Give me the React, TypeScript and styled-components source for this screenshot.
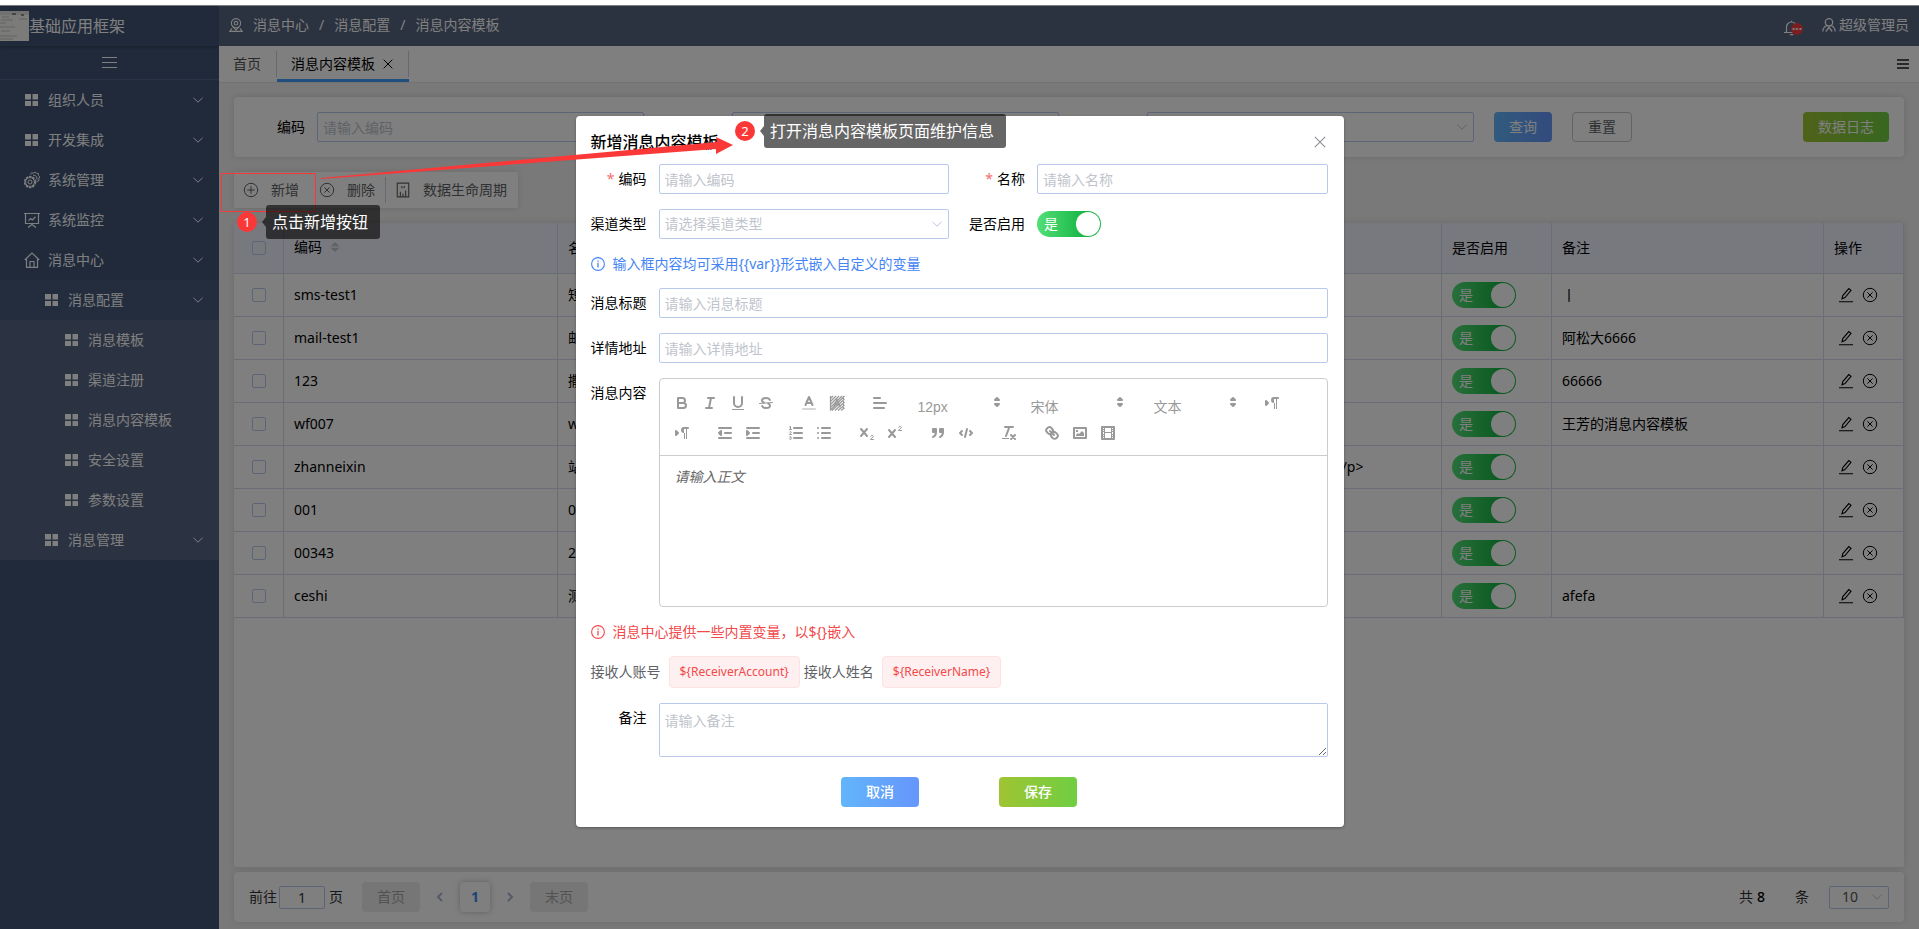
import React from "react";
import styled, { createGlobalStyle, css } from "styled-components";

const GlobalStyle = createGlobalStyle`
  *, *::before, *::after { box-sizing: border-box; }
  body {
    margin: 0;
    background: #fff;
    font-family: "Noto Sans", "Noto Sans CJK SC", sans-serif;
    font-size: 14px;
    line-height: 20px;
    color: #000;
  }
  button, input, select, textarea { font: inherit; color: inherit; margin: 0; }
  button { border: 0; padding: 0; background: none; cursor: pointer; }
  a { color: inherit; text-decoration: none; }
  svg { display: block; flex: none; }
  ul { list-style: none; margin: 0; padding: 0; }
`;

/* ---------- icons ---------- */

type IconProps = { size?: number; children: React.ReactNode; box?: number; stroke?: number };

const Icon = ({ size = 16, box = 16, stroke = 1, children }: IconProps) => (
  <svg
    width={size}
    height={size}
    viewBox={`0 0 ${box} ${box}`}
    fill="none"
    stroke="currentColor"
    strokeWidth={stroke}
    aria-hidden="true"
  >
    {children}
  </svg>
);

const GridIcon = () => (
  <Icon size={14} box={14} stroke={0}>
    <path fill="currentColor" d="M0 1h6v5.500H0zM7.500 1h5.500v5.500H7.500zM0 8h6v5H0zM7.500 8h5.500v5H7.500z" />
  </Icon>
);

const GearIcon = () => (
  <Icon size={18} box={18} stroke={1}>
    <circle cx="7" cy="11" r="5.4" strokeDasharray="2.6 0.8" strokeWidth="1.5" />
    <circle cx="7" cy="11" r="4.4" />
    <circle cx="7" cy="11" r="2" />
    <path d="M7.5 3.5l1-1.7 1.7.4L12 1l1.4 1.2 1.9.3.2 2 1.2 1.5-.9 1.6.2 1.9-1.8.8-1 1.2" />
    <path d="M10 4.2a3.4 3.4 0 0 1 3.8 4.6" />
  </Icon>
);

const MonitorIcon = () => (
  <Icon size={16}>
    <path d="M0 1.5h16M1.5 1.5v10h13v-10M8 11.5v1.5M4 15.5l4-3 4 3" strokeWidth="1.2" />
    <path d="M4.5 8.5l2.2-2 1.6 1.4 3.2-3.2" strokeWidth="1.3" />
  </Icon>
);

const HomeIcon = () => (
  <Icon size={16}>
    <path d="M.7 8L8 1l7.3 7M2.5 7v8.3h11V7M6 15.3V9.5h4v5.8" strokeWidth="1.2" />
  </Icon>
);

const ChevronDown = ({ size = 12 }: { size?: number }) => (
  <Icon size={size} box={12} stroke={1}>
    <path d="M1.5 3.8L6 8.2l4.5-4.4" />
  </Icon>
);

const ChevronSide = ({ right }: { right?: boolean }) => (
  <Icon size={12} box={12} stroke={2}>
    <path d={right ? "M4 2l4 4-4 4" : "M8 2L4 6l4 4"} />
  </Icon>
);

const CloseIcon = ({ size = 10 }: { size?: number }) => (
  <Icon size={size} box={10} stroke={1}>
    <path d="M.7.7l8.6 8.6M9.3.7L.7 9.3" />
  </Icon>
);

const PlusCircle = () => (
  <Icon size={16}>
    <circle cx="8" cy="8" r="6.7" />
    <path d="M8 4.3v7.4M4.3 8h7.4" />
  </Icon>
);

const XCircle = () => (
  <Icon size={16}>
    <circle cx="8" cy="8" r="6.7" />
    <path d="M5.4 5.4l5.2 5.2M10.6 5.4l-5.2 5.2" />
  </Icon>
);

const DataIcon = () => (
  <Icon size={16} box={14}>
    <path d="M2 1h10v12H2zM4.700 13V8.500M7 13V10M9.300 13V7.500M6 3.500v2M8 3.500v2" />
  </Icon>
);

const EditIcon = () => (
  <Icon size={16}>
    <path d="M1 14.7h14M4 11.8l.8-3.2 6-7 2.2 1.8-6 7.2z" strokeWidth="1.1" />
  </Icon>
);

const PlaceIcon = () => (
  <Icon size={14} box={14}>
    <circle cx="7" cy="5.2" r="4.6" strokeWidth="1.1" />
    <circle cx="7" cy="5.2" r="1.8" strokeWidth="1.1" />
    <path d="M3.5 8.3L7 12l3.5-3.7M3 10.2L.8 13.4h12.4L11 10.2" strokeWidth="1.1" />
  </Icon>
);

const UserIcon = () => (
  <Icon size={14} box={14}>
    <circle cx="7" cy="4.3" r="3.7" strokeWidth="1.3" />
    <path d="M4.8 7.5C2.5 8.5 1 10.7.8 13.5M9.2 7.5c2.3 1 3.8 3.2 4 6M3.8 13.5L7 9.3l3.2 4.2" strokeWidth="1.3" />
  </Icon>
);

const BellIcon = () => (
  <Icon size={16}>
    <path d="M0 12.5h15M2.5 12.5V7a5 5 0 0 1 10 0v5.5M5.8 14.6h3.4M7.5 2V.8" strokeWidth="1.2" />
  </Icon>
);

const InfoIcon = () => (
  <Icon size={14} box={14}>
    <circle cx="7" cy="7" r="6.4" strokeWidth="1.1" />
    <path d="M7 5.8v4.6M7 3.4v1.3" strokeWidth="1.3" />
  </Icon>
);

const MenuIcon = ({ thick }: { thick?: boolean }) => (
  <Icon size={16} stroke={thick ? 2 : 1}>
    {thick ? <path d="M2 4h12M2 8h12M2 12h12" /> : <path d="M0 2.5h15M0 7.5h15M0 12.5h15" />}
  </Icon>
);

const SortIcon = () => (
  <Icon size={10} box={10} stroke={0}>
    <path fill="#c0c4cc" d="M5 0l4.5 4.2h-9zM5 10L.5 5.8h9z" />
  </Icon>
);

const Quill = ({ children }: { children: React.ReactNode }) => (
  <svg
    width="18"
    height="18"
    viewBox="0 0 18 18"
    fill="none"
    stroke="#999"
    strokeWidth="2"
    strokeLinecap="round"
    strokeLinejoin="round"
    aria-hidden="true"
  >
    {children}
  </svg>
);

const solid = { fill: "#999", stroke: "none" };

const quillIcons: Record<string, React.ReactNode> = {
  加粗: <path d="M5 4h4.500a2.500 2.500 0 0 1 0 5H5zM5 9h5.500a2.500 2.500 0 0 1 0 5H5z" />,
  斜体: <path d="M7 4h6M5 14h6M8 14l2-10" />,
  下划线: (
    <>
      <path d="M5 3v6a4 4 0 0 0 8 0V3" />
      <path {...solid} d="M3 15h12v1H3z" />
    </>
  ),
  删除线: (
    <>
      <path d="M12.800 6C12.400 4.800 11 4 9 4 6.800 4 5 5 5 6.500c0 1 .6 1.600 1.800 2M5.200 12c.4 1.200 1.800 2 3.800 2 2.200 0 4-1 4-2.500 0-1-.6-1.600-1.800-2" />
      <path strokeWidth="1" d="M15.500 8.500l-13 1" />
    </>
  ),
  文字颜色: (
    <>
      <path strokeOpacity=".4" d="M3 15h12" />
      <path d="M5.500 11L9 3l3.500 8M11.600 9H6.400" />
    </>
  ),
  背景颜色: (
    <>
      <path
        strokeWidth="1.200"
        strokeLinecap="butt"
        d="M2 5l3-3M2 8l6-6M2 11l9-9M2 14l12-12M2 16.500L16.500 2M4 16.500L16.500 5M7 16.500L16.500 8M10 16.500l6.500-5.500M13 16.500l3.500-2.500M2.500 2v14M15.500 2v14"
      />
      <path d="M6 12.500l3-7 3 7M7 10.500h4" strokeWidth="1.500" />
    </>
  ),
  对齐: <path d="M3 9h12M3 14h10M3 4h6" />,
  方向: (
    <>
      <path fill="#999" strokeWidth="2" d="M3 11l2-2-2-2z" />
      <path d="M15 4h-4" />
      <path {...solid} d="M11 3a3 3 0 0 0 0 6h1V3zM11 4h1v11h-1zM13 4h1v11h-1z" />
    </>
  ),
  减少缩进: <path fill="#999" d="M3 14h12M3 4h12M9 9h6M5 7v4L3 9z" />,
  增加缩进: <path fill="#999" d="M3 14h12M3 4h12M9 9h6M3 7v4l2-2z" />,
  有序列表: (
    <>
      <path d="M7 4h8M7 9h8M7 14h8" />
      <path strokeWidth="1" d="M2.500 3l1-.5v3M2.500 5.500h2M2.500 8c.5-.8 1.900-.5 1.800.4 0 .7-1.800 1.600-1.800 2.100h2M2.500 13c.6-.7 1.800-.4 1.800.3 0 .5-.4.700-.8.700.4 0 .8.300.8.800 0 .8-1.300 1-1.800.2" />
    </>
  ),
  无序列表: <path d="M7 4h8M7 9h8M7 14h8M3 4v0M3 9v0M3 14v0" />,
  下标: (
    <>
      <path d="M3 5l6 7M9 5l-6 7" />
      <path strokeWidth="1" d="M12.600 12.200c.5-1.200 2.700-1 2.700.3 0 1.200-2.700 1.800-2.700 3h2.900" />
    </>
  ),
  上标: (
    <>
      <path d="M3 6l6 7M9 6l-6 7" />
      <path strokeWidth="1" d="M12.600 3.200c.5-1.200 2.700-1 2.700.3 0 1.200-2.700 1.800-2.700 3h2.900" />
    </>
  ),
  引用: <path fill="#999" d="M4 5h3v3H4zM11 5h3v3h-3zM7 8c0 4-3 5-3 5M14 8c0 4-3 5-3 5" />,
  代码: <path d="M5 7L3 9l2 2M13 7l2 2-2 2M10 5L8 13" />,
  清除格式: (
    <>
      <path d="M5 3h8M6 12l3.400-9M11 15l4-4M15 15l-4-4" />
      <path {...solid} d="M2 14h7v1H2z" />
    </>
  ),
  链接: (
    <path d="M7 7l4 4M8.900 4.600a3.500 3.500 0 0 1 .36 4.700A3.500 3.500 0 0 1 4.600 8.900C3.200 7.500 2 6.400 4.200 4.200S7.500 3.200 8.900 4.600zM13.400 9.100a3.500 3.500 0 0 0-4.700-.36 3.500 3.500 0 0 0 .36 4.700c1.400 1.400 2.500 2.500 4.700.36S14.800 10.500 13.400 9.100z" />
  ),
  图片: (
    <>
      <path d="M3 4h12v10H3z" />
      <path {...solid} d="M5 12v-1l2-2 1 1 3-3 2 2v3zM5 6h2v2H5z" />
    </>
  ),
  视频: (
    <>
      <path d="M3 3h12v12H3z" />
      <path {...solid} d="M5 3h1v12H5zM12 3h1v12h-1zM5 8h8v1H5zM3 5h3v1H3zM3 7h3v1H3zM3 10h3v1H3zM3 12h3v1H3zM12 5h3v1h-3zM12 7h3v1h-3zM12 10h3v1h-3zM12 12h3v1h-3z" />
    </>
  ),
};

/* ---------- frame ---------- */

const Page = styled.div`
  position: relative;
  display: grid;
  grid-template-columns: 219px minmax(0, 1fr);
  min-height: 100vh;
  padding-top: 6px;
`;

const Sidebar = styled.aside`
  background: #405476;
  color: #fff;
`;

const Brand = styled.div`
  display: flex;
  align-items: center;
  height: 40px;
  font-size: 16px;
  box-shadow: 0 1px 3px rgba(0, 0, 0, 0.3);
`;

const Collapse = styled.button`
  display: flex;
  align-items: center;
  justify-content: center;
  width: 100%;
  height: 34px;
  border-bottom: 1px solid #52668a;
`;

const Menu = styled.ul<{ $tone: string }>`
  background: ${(p) => p.$tone};
`;

const MenuLink = styled.a<{ $level: number; $tone: string }>`
  display: flex;
  align-items: center;
  gap: 9px;
  height: 40px;
  padding: 0 15px 0 ${(p) => 5 + p.$level * 20}px;
  background: ${(p) => p.$tone};
`;

const MenuIconBox = styled.span`
  display: flex;
  justify-content: center;
  width: 14px;
`;

const MenuText = styled.span`
  flex: 1;
`;

const Main = styled.div`
  display: flex;
  flex-direction: column;
  min-width: 0;
  background: #f2f2f2;
`;

const TopBar = styled.header`
  display: flex;
  align-items: center;
  justify-content: space-between;
  height: 40px;
  padding: 0 10px;
  background: #566480;
  color: #fff;
`;

const Crumbs = styled.nav`
  display: flex;
  align-items: center;
  gap: 10px;
  padding-bottom: 2px;
`;

const UserArea = styled.div`
  display: flex;
  align-items: center;
  gap: 22px;
  padding-bottom: 3px;
`;

const Bell = styled.button`
  position: relative;
  padding-top: 6px;
`;

const Badge = styled.span`
  position: absolute;
  left: 7px;
  top: 9px;
  width: 12px;
  height: 12px;
  border-radius: 6px;
  background: #f53f3f;
  font-size: 12px;
  font-weight: 700;
  line-height: 6px;
  text-align: center;
`;

const User = styled.button`
  display: flex;
  align-items: center;
  gap: 3px;
`;

const Tabs = styled.nav`
  display: flex;
  align-items: center;
  height: 37px;
  padding-right: 8px;
  background: #fff;
  border-bottom: 1px solid #e4e4e4;
`;

const Tab = styled.a<{ $active?: boolean }>`
  display: flex;
  align-items: center;
  height: 36px;
  color: ${(p) => (p.$active ? "#000" : "#555")};
  ${(p) => p.$active && "border-bottom: 3px solid #409eff; padding-top: 3px;"}
`;

const TabText = styled.span`
  display: flex;
  align-items: center;
  gap: 8px;
  height: 26px;
  padding: 0 15px 0 14px;
  border-right: 1px solid #ccd3e6;
`;

const TabMore = styled.button`
  margin-left: auto;
  color: #555;
`;

const Content = styled.main`
  flex: 1;
  display: flex;
  flex-direction: column;
  padding: 14px 15px 7px;
`;

const Card = styled.section`
  background: #fff;
  border-radius: 4px;
  box-shadow: 0 0 6px rgba(0, 0, 0, 0.12);
`;

const SearchCard = styled(Card)`
  display: flex;
  align-items: center;
  gap: 20px;
  padding: 15px;
`;

const Field = styled.div`
  flex: 1;
  display: flex;
  align-items: center;
`;

const SearchLabel = styled.label`
  flex: none;
  width: 68px;
  padding-right: 12px;
  text-align: right;
`;

const inputLook = css`
  min-width: 0;
  width: 100%;
  height: 30px;
  padding: 0 5px;
  border: 1px solid #b8c9ec;
  border-radius: 2px;
  background: transparent;
  outline: none;
  &::placeholder { color: #c0c4cc; opacity: 1; }
`;

const Input = styled.input`
  ${inputLook}
`;

const SelectBox = styled.div`
  position: relative;
  flex: 1;
  color: #b8c4de;
  > svg {
    position: absolute;
    right: 6px;
    top: 9px;
    pointer-events: none;
  }
`;

const Select = styled.select`
  ${inputLook}
  appearance: none;
  color: #c0c4cc;
`;

const Button = styled.button<{ $kind: "blue" | "green" | "plain"; $width: number }>`
  width: ${(p) => p.$width}px;
  height: 30px;
  border-radius: 4px;
  color: #fff;
  ${(p) =>
    p.$kind === "blue" &&
    css`
      background: linear-gradient(90deg, #62b5fb, #6696fb);
    `}
  ${(p) =>
    p.$kind === "green" &&
    css`
      background: linear-gradient(90deg, #9fc433, #70ce42);
    `}
  ${(p) =>
    p.$kind === "plain" &&
    css`
      border: 1px solid #c4c6cc;
      color: #606266;
    `}
`;

const SearchActions = styled.div`
  display: flex;
  gap: 20px;
  width: 395px;
  > :last-child { margin-left: auto; }
`;

const Tools = styled(Card)`
  display: flex;
  align-items: center;
  align-self: flex-start;
  height: 36px;
  margin-top: 15px;
  border-radius: 2px;
`;

const Tool = styled.button<{ $divided?: boolean }>`
  display: flex;
  align-items: center;
  gap: 12px;
  height: 26px;
  padding: 0 10px 0 9px;
  color: #606266;
  border-right: 1px solid ${(p) => (p.$divided ? "#ccd3e6" : "transparent")};
`;

const TablePanel = styled(Card)`
  flex: 1;
  margin-top: 15px;
  border-radius: 2px;
`;

const Table = styled.table`
  width: 100%;
  table-layout: fixed;
  border-collapse: separate;
  border-spacing: 0;
`;

const Th = styled.th<{ $w?: number }>`
  width: ${(p) => (p.$w ? `${p.$w}px` : "auto")};
  height: 51px;
  padding: 0 10px;
  font-weight: 400;
  text-align: left;
  background: #f0f2fe;
  border-right: 1px solid #d5daea;
  border-bottom: 1px solid #d5daea;
`;

const SortHead = styled.span`
  display: flex;
  align-items: center;
  gap: 8px;
  padding-bottom: 3px;
`;

const Td = styled.td`
  height: 43px;
  padding: 0 10px;
  white-space: nowrap;
  overflow: hidden;
  border-right: 1px solid #d5daea;
  border-bottom: 1px solid #d5daea;
`;

const Check = styled.input`
  display: block;
  appearance: none;
  width: 14px;
  height: 14px;
  margin: 0 auto;
  border: 1px solid #b8c9ec;
  border-radius: 2px;
`;

const RowActions = styled.div`
  display: flex;
  gap: 8px;
  padding-left: 4px;
  > button { display: block; }
`;

const ToggleBox = styled.label`
  position: relative;
  display: flex;
  align-items: center;
  width: 64px;
  height: 26px;
  padding-left: 7px;
  border-radius: 13px;
  background: linear-gradient(90deg, #52df76, #17b545 75%);
  color: #fff;
  &::after {
    content: "";
    position: absolute;
    right: 1px;
    top: 1px;
    width: 24px;
    height: 24px;
    border-radius: 12px;
    background: #fff;
  }
  > input {
    position: absolute;
    inset: 0;
    opacity: 0;
  }
`;

const Pager = styled(Card)`
  display: flex;
  align-items: center;
  height: 50px;
  margin-top: 5px;
  padding: 0 15px;
  color: #303133;
`;

const PageInput = styled.input`
  width: 46px;
  height: 23px;
  margin: 0 4px 0 2px;
  border: 1px solid #b8c9ec;
  border-radius: 2px;
  background: transparent;
  text-align: center;
`;

const PageEnd = styled.button`
  width: 58px;
  height: 30px;
  border-radius: 4px;
  background: #ececec;
  color: #a3a5a9;
`;

const PageStep = styled.button`
  width: 40px;
  display: flex;
  justify-content: center;
  color: #a8b4cc;
`;

const PageNow = styled.button`
  width: 30px;
  height: 30px;
  border-radius: 4px;
  box-shadow: 0 0 6px rgba(0, 0, 0, 0.25);
  color: #3c82f6;
  font-weight: 700;
`;

const Steps = styled.div`
  display: flex;
  align-items: center;
  margin-left: 19px;
`;

const Total = styled.div`
  display: flex;
  align-items: center;
  gap: 4px;
  margin-left: auto;
  > b { font-weight: 500; color: #000; }
`;

const Unit = styled.span`
  margin: 0 20px 0 30px;
`;

const SizeBox = styled(SelectBox)`
  flex: none;
  width: 60px;
  > svg { top: 5px; }
`;

const SizeSelect = styled(Select)`
  display: block;
  height: 23px;
  padding: 0 12px;
  line-height: 20px;
  color: #555;
`;

/* ---------- dialog ---------- */

const Mask = styled.div`
  position: absolute;
  inset: 5px 0 0;
  display: flex;
  align-items: flex-start;
  justify-content: center;
  padding-top: 111px;
  background: rgba(0, 0, 0, 0.5);
`;

const Dialog = styled.section`
  width: 40%;
  min-width: 768px;
  padding: 16px 16px 20px 15px;
  background: #fff;
  border-radius: 4px;
  box-shadow: 0 1px 3px rgba(0, 0, 0, 0.3);
`;

const DialogHead = styled.header`
  display: flex;
  align-items: center;
  justify-content: space-between;
  height: 20px;
  margin-bottom: 12px;
  padding: 0 2px 0 0;
  color: #909399;
`;

const DialogTitle = styled.h2`
  margin: 0;
  font-size: 16px;
  font-weight: 500;
  color: #000;
`;

const FormGrid = styled.div`
  display: grid;
  grid-template-columns: 1fr 1fr;
  gap: 15px 20px;
`;

const FormItem = styled.div<{ $wide?: boolean; $top?: boolean }>`
  display: flex;
  align-items: ${(p) => (p.$top ? "flex-start" : "center")};
  min-height: 30px;
  ${(p) => p.$wide && "grid-column: 1 / -1;"}
`;

const Label = styled.label<{ $required?: boolean }>`
  flex: none;
  width: 68px;
  padding: 5px 12px 5px 0;
  text-align: right;
  ${(p) =>
    p.$required &&
    css`
      &::before {
        content: "*";
        margin-right: 4px;
        color: #f56c6c;
      }
    `}
`;

const Note = styled.p<{ $color: string }>`
  grid-column: 1 / -1;
  display: flex;
  align-items: center;
  gap: 8px;
  height: 19px;
  margin: 0;
  color: ${(p) => p.$color};
`;

const Editor = styled.div`
  flex: 1;
  border: 1px solid #ccc;
  border-radius: 4px;
`;

const EditorTools = styled.div`
  display: flex;
  flex-wrap: wrap;
  padding: 9px 8px 7px;
  border-bottom: 1px solid #ccc;
`;

const ToolGroup = styled.div`
  display: flex;
  align-items: center;
  height: 30px;
  margin-right: 15px;
`;

const EditorButton = styled.button`
  display: flex;
  align-items: center;
  justify-content: center;
  width: 28px;
  height: 24px;
`;

const Picker = styled.div<{ $w: number }>`
  position: relative;
  width: ${(p) => p.$w}px;
  height: 24px;
  > svg {
    position: absolute;
    right: 1px;
    top: 2px;
    pointer-events: none;
  }
`;

const PickerSelect = styled.select`
  appearance: none;
  width: 100%;
  height: 32px;
  padding: 0 9px;
  border: 0;
  outline: none;
  background: transparent;
  color: #999;
  font-family: "Liberation Sans", "Noto Sans CJK SC", sans-serif;
`;

const EditorText = styled.textarea`
  display: block;
  width: 100%;
  height: 150px;
  padding: 11px 15px;
  border: 0;
  outline: none;
  resize: none;
  background: transparent;
  &::placeholder { color: #666; font-style: italic; opacity: 1; }
`;

const Variables = styled.div`
  display: flex;
  align-items: center;
  height: 32px;
  margin: 15px 0;
  color: #606266;
`;

const Tag = styled.span`
  margin: 0 4px 0 8px;
  padding: 0 10px;
  border: 1px solid #fde2e2;
  border-radius: 4px;
  background: #fef0f0;
  color: #f2494a;
  font-size: 12px;
  line-height: 30px;
`;

const Remark = styled.textarea`
  ${inputLook}
  display: block;
  height: 54px;
  padding: 7px 5px;
  resize: vertical;
`;

const DialogFoot = styled.footer`
  display: flex;
  justify-content: center;
  gap: 80px;
  margin-top: 20px;
  font-weight: 500;
`;

/* ---------- guide marks ---------- */

const Guide = styled.div<{ $x: number; $y: number }>`
  position: absolute;
  left: ${(p) => p.$x}px;
  top: ${(p) => p.$y}px;
  display: flex;
  align-items: center;
  color: #fff;
`;

const StepDot = styled.span`
  width: 20px;
  height: 20px;
  margin-right: 9px;
  border-radius: 10px;
  background: #fb3838;
  font-size: 13px;
  line-height: 20px;
  text-align: center;
`;

const StepTip = styled.span`
  position: relative;
  padding: 0 12px 0 6px;
  height: 34px;
  border-radius: 3px;
  background: rgba(0, 0, 0, 0.6);
  font-size: 16px;
  line-height: 34px;
  white-space: nowrap;
  &::before {
    content: "";
    position: absolute;
    left: -4px;
    top: 12px;
    border: solid transparent;
    border-width: 5px 4px 5px 0;
    border-right-color: rgba(0, 0, 0, 0.6);
  }
`;

const TargetBox = styled.div`
  position: absolute;
  left: 221px;
  top: 173px;
  width: 95px;
  height: 39px;
  border: 1px solid #fb3838;
`;

const ArrowLayer = styled.svg`
  position: absolute;
  left: 321px;
  top: 136px;
  pointer-events: none;
`;

/* ---------- data ---------- */

type Node = { text: string; icon: React.ReactNode; open?: boolean; deep?: boolean; items?: Node[] };

const menu: Node[] = [
  { text: "组织人员", icon: <GridIcon />, open: true },
  { text: "开发集成", icon: <GridIcon />, open: true },
  { text: "系统管理", icon: <GearIcon />, open: true },
  { text: "系统监控", icon: <MonitorIcon />, open: true },
  {
    text: "消息中心",
    icon: <HomeIcon />,
    open: true,
    items: [
      {
        text: "消息配置",
        icon: <GridIcon />,
        open: true,
        items: ["消息模板", "渠道注册", "消息内容模板", "安全设置", "参数设置"].map((text) => ({
          text,
          icon: <GridIcon />,
        })),
      },
      { text: "消息管理", icon: <GridIcon />, open: true, deep: true },
    ],
  },
];

const tones = ["transparent", "#465a7c", "#566482"];

const MenuTree = ({ nodes, level = 1 }: { nodes: Node[]; level?: number }) => (
  <Menu $tone={tones[level - 1]}>
    {nodes.map((n) => (
      <li key={n.text}>
        <MenuLink href="#" $level={level} $tone={n.deep ? tones[2] : "transparent"}>
          <MenuIconBox>{n.icon}</MenuIconBox>
          <MenuText>{n.text}</MenuText>
          {n.open && <ChevronDown />}
        </MenuLink>
        {n.items && <MenuTree nodes={n.items} level={level + 1} />}
      </li>
    ))}
  </Menu>
);

const rows = [
  { code: "sms-test1", name: "短", body: "", remark: "丨" },
  { code: "mail-test1", name: "邮", body: "", remark: "阿松大6666" },
  { code: "123", name: "撒", body: "", remark: "66666" },
  { code: "wf007", name: "wf", body: "", remark: "王芳的消息内容模板" },
  { code: "zhanneixin", name: "站", body: "<p>站内信</p>", remark: "" },
  { code: "001", name: "00", body: "", remark: "" },
  { code: "00343", name: "2", body: "", remark: "" },
  { code: "ceshi", name: "测", body: "", remark: "afefa" },
];

const Toggle = ({ label }: { label: string }) => (
  <ToggleBox>
    <input type="checkbox" defaultChecked aria-label={label} />
    是
  </ToggleBox>
);

const EditorGroup = ({ names }: { names: string[] }) => (
  <ToolGroup>
    {names.map((n) => (
      <EditorButton key={n} type="button" aria-label={n}>
        <Quill>{quillIcons[n]}</Quill>
      </EditorButton>
    ))}
  </ToolGroup>
);

const EditorPicker = ({ width, value, label }: { width: number; value: string; label: string }) => (
  <ToolGroup>
    <Picker $w={width}>
      <PickerSelect aria-label={label}>
        <option>{value}</option>
      </PickerSelect>
      <Quill>
        <path {...solid} stroke="#999" strokeWidth="2" d="M7 11l2 2 2-2zM7 7l2-2 2 2z" />
      </Quill>
    </Picker>
  </ToolGroup>
);

export default function App() {
  return (
    <>
      <GlobalStyle />
      <Page>
        <Sidebar>
          <Brand>
            <svg width="29" height="30" viewBox="0 0 29 30" aria-hidden="true">
              <rect width="29" height="30" fill="#f6f6f2" />
              <rect width="29" height="4" fill="#e2e2de" />
              <path
                d="M2 6h7M1 9h12M0 12h6M0 16h15M1 20h9M0 25h17M0 28h13M19 8h8"
                stroke="#c8c8c4"
                strokeWidth="1"
              />
              <path d="M12 3h4M21 4h3" stroke="#8c8c88" strokeWidth="2" />
            </svg>
            基础应用框架
          </Brand>
          <Collapse aria-label="收起菜单">
            <MenuIcon />
          </Collapse>
          <nav aria-label="主菜单">
            <MenuTree nodes={menu} />
          </nav>
        </Sidebar>

        <Main>
          <TopBar>
            <Crumbs aria-label="位置">
              <PlaceIcon />
              <a href="#">消息中心</a>
              <span>/</span>
              <a href="#">消息配置</a>
              <span>/</span>
              <a href="#">消息内容模板</a>
            </Crumbs>
            <UserArea>
              <Bell aria-label="通知">
                <BellIcon />
                <Badge>...</Badge>
              </Bell>
              <User>
                <UserIcon />
                超级管理员
              </User>
            </UserArea>
          </TopBar>

          <Tabs>
            <Tab href="#">
              <TabText>首页</TabText>
            </Tab>
            <Tab href="#" $active>
              <TabText>
                消息内容模板
                <CloseIcon size={10} />
              </TabText>
            </Tab>
            <TabMore aria-label="标签操作">
              <MenuIcon thick />
            </TabMore>
          </Tabs>

          <Content>
            <SearchCard>
              <Field>
                <SearchLabel htmlFor="q-code">编码</SearchLabel>
                <Input id="q-code" placeholder="请输入编码" />
              </Field>
              <Field>
                <SearchLabel htmlFor="q-name" />
                <Input id="q-name" aria-label="名称" />
              </Field>
              <Field>
                <SearchLabel htmlFor="q-on" />
                <SelectBox>
                  <Select id="q-on" aria-label="是否启用">
                    <option></option>
                  </Select>
                  <ChevronDown />
                </SelectBox>
              </Field>
              <SearchActions>
                <Button $kind="blue" $width={58}>查询</Button>
                <Button $kind="plain" $width={60}>重置</Button>
                <Button $kind="green" $width={86}>数据日志</Button>
              </SearchActions>
            </SearchCard>

            <Tools>
              <Tool>
                <PlusCircle />
                新增
              </Tool>
              <Tool $divided>
                <XCircle />
                删除
              </Tool>
              <Tool>
                <DataIcon />
                数据生命周期
              </Tool>
            </Tools>

            <TablePanel>
              <Table>
                <thead>
                  <tr>
                    <Th $w={50}>
                      <Check type="checkbox" aria-label="全选" />
                    </Th>
                    <Th $w={274}>
                      <SortHead>
                        编码
                        <SortIcon />
                      </SortHead>
                    </Th>
                    <Th $w={274}>名称</Th>
                    <Th $w={425} aria-label="渠道类型" />
                    <Th aria-label="消息内容" />
                    <Th $w={110}>是否启用</Th>
                    <Th $w={272}>备注</Th>
                    <Th $w={80}>操作</Th>
                  </tr>
                </thead>
                <tbody>
                  {rows.map((r) => (
                    <tr key={r.code}>
                      <Td>
                        <Check type="checkbox" aria-label={`选择 ${r.code}`} />
                      </Td>
                      <Td>{r.code}</Td>
                      <Td>{r.name}</Td>
                      <Td />
                      <Td>{r.body}</Td>
                      <Td>
                        <Toggle label={`${r.code} 是否启用`} />
                      </Td>
                      <Td>{r.remark}</Td>
                      <Td>
                        <RowActions>
                          <button aria-label="编辑">
                            <EditIcon />
                          </button>
                          <button aria-label="删除">
                            <XCircle />
                          </button>
                        </RowActions>
                      </Td>
                    </tr>
                  ))}
                </tbody>
              </Table>
            </TablePanel>

            <Pager>
              <label htmlFor="page-no">前往</label>
              <PageInput id="page-no" defaultValue="1" />
              页
              <Steps>
                <PageEnd>首页</PageEnd>
                <PageStep aria-label="上一页">
                  <ChevronSide />
                </PageStep>
                <PageNow>1</PageNow>
                <PageStep aria-label="下一页">
                  <ChevronSide right />
                </PageStep>
                <PageEnd>末页</PageEnd>
              </Steps>
              <Total>
                共<b>8</b>
              </Total>
              <Unit>条</Unit>
              <SizeBox>
                <SizeSelect aria-label="每页条数">
                  <option>10</option>
                </SizeSelect>
                <ChevronDown />
              </SizeBox>
            </Pager>
          </Content>
        </Main>

        <Mask>
          <Dialog role="dialog" aria-modal="true" aria-labelledby="dialog-title">
            <DialogHead>
              <DialogTitle id="dialog-title">新增消息内容模板</DialogTitle>
              <button aria-label="关闭">
                <CloseIcon size={12} />
              </button>
            </DialogHead>
            <FormGrid>
              <FormItem>
                <Label htmlFor="f-code" $required>编码</Label>
                <Input id="f-code" placeholder="请输入编码" />
              </FormItem>
              <FormItem>
                <Label htmlFor="f-name" $required>名称</Label>
                <Input id="f-name" placeholder="请输入名称" />
              </FormItem>
              <FormItem>
                <Label htmlFor="f-type">渠道类型</Label>
                <SelectBox>
                  <Select id="f-type">
                    <option>请选择渠道类型</option>
                  </Select>
                  <ChevronDown />
                </SelectBox>
              </FormItem>
              <FormItem>
                <Label as="span">是否启用</Label>
                <Toggle label="是否启用" />
              </FormItem>
              <Note $color="#4484f5">
                <InfoIcon />
                {"输入框内容均可采用{{var}}形式嵌入自定义的变量"}
              </Note>
              <FormItem $wide>
                <Label htmlFor="f-title">消息标题</Label>
                <Input id="f-title" placeholder="请输入消息标题" />
              </FormItem>
              <FormItem $wide>
                <Label htmlFor="f-url">详情地址</Label>
                <Input id="f-url" placeholder="请输入详情地址" />
              </FormItem>
              <FormItem $wide $top>
                <Label htmlFor="f-body">消息内容</Label>
                <Editor>
                  <EditorTools>
                    <EditorGroup names={["加粗", "斜体", "下划线", "删除线"]} />
                    <EditorGroup names={["文字颜色", "背景颜色"]} />
                    <EditorGroup names={["对齐"]} />
                    <EditorPicker width={98} value="12px" label="字号" />
                    <EditorPicker width={108} value="宋体" label="字体" />
                    <EditorPicker width={98} value="文本" label="标题" />
                    <EditorGroup names={["方向"]} />
                    <EditorGroup names={["方向"]} />
                    <EditorGroup names={["减少缩进", "增加缩进"]} />
                    <EditorGroup names={["有序列表", "无序列表"]} />
                    <EditorGroup names={["下标", "上标"]} />
                    <EditorGroup names={["引用", "代码"]} />
                    <EditorGroup names={["清除格式"]} />
                    <EditorGroup names={["链接", "图片", "视频"]} />
                  </EditorTools>
                  <EditorText id="f-body" placeholder="请输入正文" />
                </Editor>
              </FormItem>
              <Note $color="#f2494a">
                <InfoIcon />
                {"消息中心提供一些内置变量，以${}嵌入"}
              </Note>
            </FormGrid>
            <Variables>
              接收人账号<Tag>{"${ReceiverAccount}"}</Tag>
              接收人姓名<Tag>{"${ReceiverName}"}</Tag>
            </Variables>
            <FormItem $top>
              <Label htmlFor="f-remark">备注</Label>
              <Remark id="f-remark" placeholder="请输入备注" />
            </FormItem>
            <DialogFoot>
              <Button $kind="blue" $width={78}>取消</Button>
              <Button $kind="green" $width={78}>保存</Button>
            </DialogFoot>
          </Dialog>
        </Mask>

        <TargetBox />
        <ArrowLayer width="413" height="44" viewBox="0 0 413 44" aria-hidden="true">
          <path fill="#fb3838" d="M0 42L396 6 395 1l17 8-17 9v-5L0 43z" />
        </ArrowLayer>
        <Guide $x={237} $y={205}>
          <StepDot>1</StepDot>
          <StepTip>点击新增按钮</StepTip>
        </Guide>
        <Guide $x={735} $y={114}>
          <StepDot>2</StepDot>
          <StepTip>打开消息内容模板页面维护信息</StepTip>
        </Guide>
      </Page>
    </>
  );
}
